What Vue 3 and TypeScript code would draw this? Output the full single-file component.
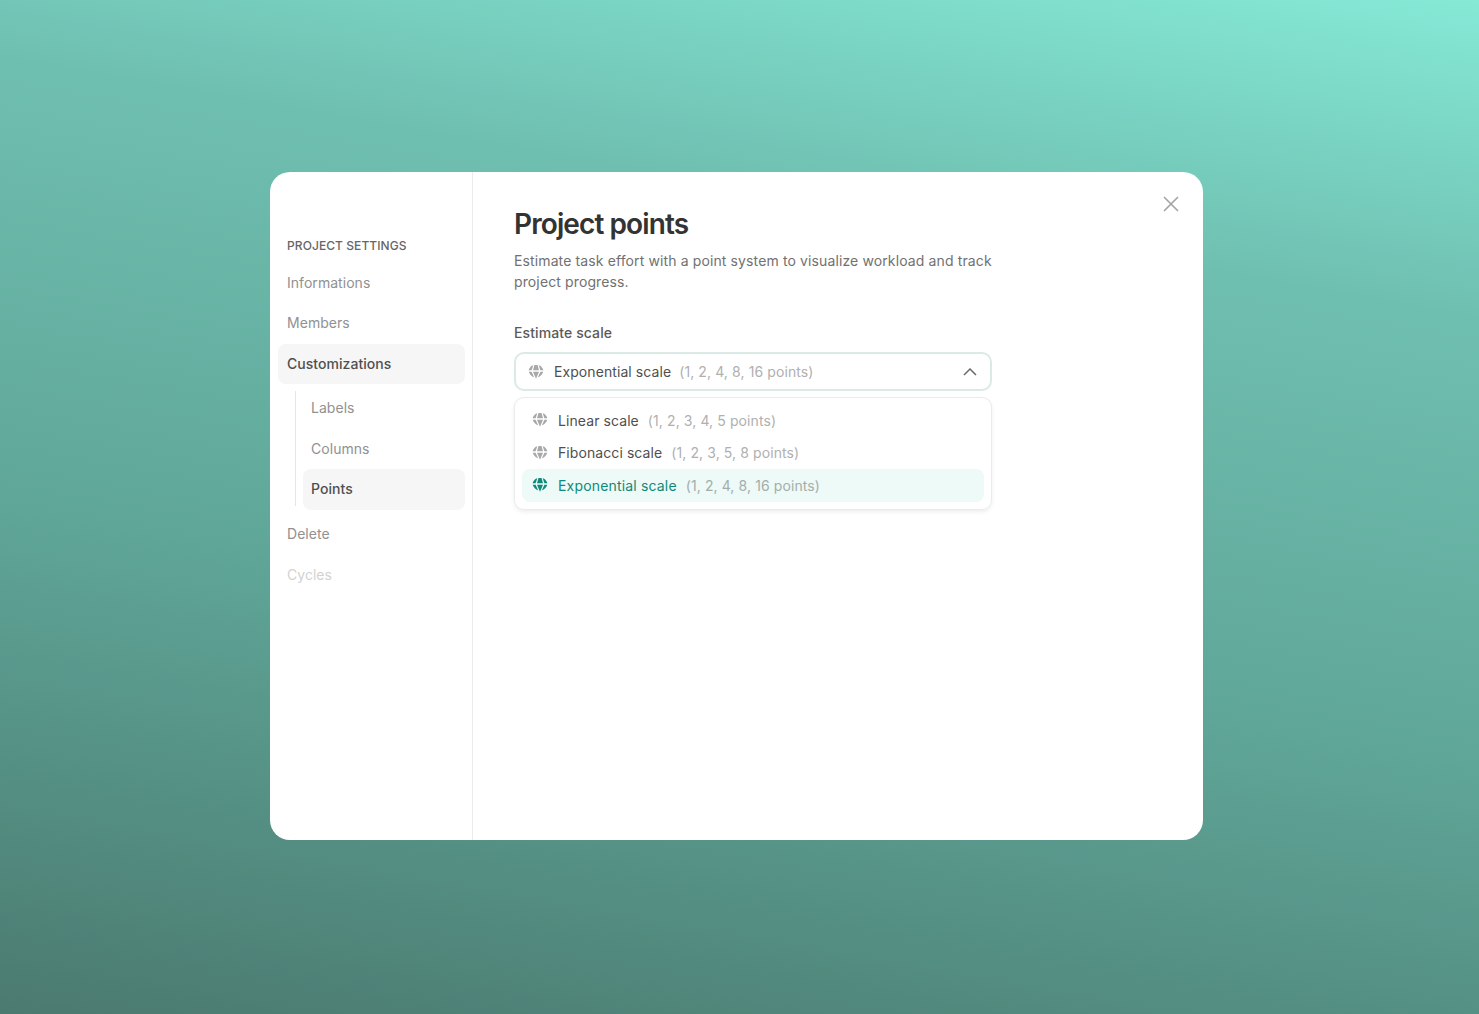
<template>
  <div class="page">
    <div class="modal">
      <aside class="sidebar">
        <h2 class="side-title">PROJECT SETTINGS</h2>
        <a class="nav-item">Informations</a>
        <a class="nav-item">Members</a>
        <a class="nav-item active">Customizations</a>
        <div class="sub-nav">
          <a v-for="s in subItems" :key="s" class="nav-item sub" :class="{ active: s === 'Points' }">{{ s }}</a>
        </div>
        <a class="nav-item delete">Delete</a>
        <a class="nav-item disabled">Cycles</a>
      </aside>
      <main class="content">
        <button class="close" aria-label="Close">
          <svg width="16" height="16" viewBox="0 0 16 16" fill="none" stroke="#a3a3a3" stroke-width="1.6">
            <path d="M1 1l14 14M15 1L1 15" />
          </svg>
        </button>
        <h1 class="title">Project points</h1>
        <p class="desc">Estimate task effort with a point system to visualize workload and track project progress.</p>
        <label class="label">Estimate scale</label>
        <div class="select">
          <svg class="gem" viewBox="0 0 16 16" fill="#a8a8a8"><path :d="gemPath" /></svg>
          <span class="opt-name">Exponential scale</span>
          <span class="opt-hint">(1, 2, 4, 8, 16 points)</span>
          <svg class="chev" width="14" height="8" viewBox="0 0 14 8" fill="none" stroke="#6b6b6b" stroke-width="1.5">
            <path d="M1 7l6-6 6 6" />
          </svg>
        </div>
        <div class="menu">
          <div v-for="o in options" :key="o.name" class="option" :class="{ selected: o.selected }">
            <svg class="gem" viewBox="0 0 16 16" fill="currentColor"><path :d="gemPath" /></svg>
            <span class="opt-name">{{ o.name }}</span>
            <span class="opt-hint">{{ o.hint }}</span>
          </div>
        </div>
      </main>
    </div>
  </div>
</template>

<script setup lang="ts">
interface ScaleOption {
  name: string
  hint: string
  selected?: boolean
}

const subItems = ['Labels', 'Columns', 'Points']

const options: ScaleOption[] = [
  { name: 'Linear scale', hint: '(1, 2, 3, 4, 5 points)' },
  { name: 'Fibonacci scale', hint: '(1, 2, 3, 5, 8 points)' },
  { name: 'Exponential scale', hint: '(1, 2, 4, 8, 16 points)', selected: true }
]

// gem: three facets on top, three converging to a point below
const gemPath =
  'M4.4 1.6C2.6 2.6 1.2 4.2.6 6.2h3L5.3 1.3zM6.5 1h3L11 6.2H5zM11.6 1.6c1.8 1 3.2 2.6 3.8 4.6h-3L10.7 1.3zM.7 7.8h2.9l2.6 5.8C3.6 12.6 1.6 10.4.7 7.8zM5 7.8h6l-3 7zM15.3 7.8h-2.9l-2.6 5.8c2.6-1 4.6-3.2 5.5-5.8z'
</script>

<style>
html,
body {
  margin: 0;
  height: 100%;
}
</style>

<style scoped>
.page {
  height: 1014px;
  display: flex;
  align-items: flex-start;
  justify-content: flex-start;
  padding: 172px 0 0 270px;
  box-sizing: border-box;
  background: linear-gradient(190deg, #85e9d6 0%, #6fbfb0 25%, #5fa698 60%, #4b7a70 100%);
  font-family: Inter, "Liberation Sans", sans-serif;
}

.modal {
  width: 933px;
  height: 668px;
  display: flex;
  background: #fff;
  border-radius: 20px;
  overflow: hidden;
}

.sidebar {
  width: 203px;
  flex-shrink: 0;
  box-sizing: border-box;
  padding: 66px 7px 0 8px;
  border-right: 1px solid #e9ecec;
  display: flex;
  flex-direction: column;
}

.side-title {
  margin: 0 0 9.5px 9px;
  font-size: 12px;
  line-height: 15px;
  font-weight: 500;
  letter-spacing: 0.08px;
  color: #666;
}

.nav-item {
  display: block;
  height: 40.5px;
  line-height: 40.5px;
  padding-left: 9px;
  border-radius: 8px;
  font-size: 14px;
  letter-spacing: 0.04px;
  color: #919191;
}

.nav-item.active {
  background: #f6f6f6;
  color: #4f4f4f;
  font-weight: 500;
}

.nav-item.disabled {
  color: #d2d2d2;
}

.sub-nav {
  position: relative;
  margin: 4px 0 4.5px 17px;
  padding-left: 8px;
  display: flex;
  flex-direction: column;
}

.sub-nav::before {
  content: "";
  position: absolute;
  left: 0;
  top: 3px;
  bottom: 4px;
  width: 1px;
  background: #e6e6e6;
}

.nav-item.sub {
  padding-left: 8px;
}

.content {
  position: relative;
  flex: 1;
  padding: 36px 0 0 41px;
}

.close {
  position: absolute;
  top: 24px;
  right: 24px;
  padding: 0;
  border: 0;
  background: none;
  line-height: 0;
}

.title {
  margin: 0;
  font-size: 28px;
  line-height: 32px;
  font-weight: 600;
  letter-spacing: -0.9px;
  color: #333;
}

.desc {
  width: 490px;
  margin: 10px 0 0;
  font-size: 14px;
  line-height: 21px;
  letter-spacing: 0.12px;
  color: #717171;
}

.label {
  display: block;
  margin-top: 31px;
  font-size: 14px;
  line-height: 20px;
  font-weight: 500;
  letter-spacing: 0.1px;
  color: #5a5a5a;
}

.select {
  width: 478px;
  height: 39px;
  margin-top: 9px;
  box-sizing: border-box;
  padding: 0 13px 0 12px;
  display: flex;
  align-items: center;
  border: 2px solid #dceae7;
  border-radius: 10px;
}

.gem {
  width: 16px;
  height: 16px;
  flex-shrink: 0;
  margin-right: 10px;
}

.opt-name {
  font-size: 14px;
  letter-spacing: 0.08px;
  color: #4f4f4f;
  margin-right: 9px;
}

.select .opt-name {
  margin-right: 8px;
}

.opt-hint {
  font-size: 14px;
  letter-spacing: 0.1px;
  color: #b0b0b0;
}

.chev {
  margin-left: auto;
}

.menu {
  width: 478px;
  margin-top: 6px;
  box-sizing: border-box;
  padding: 6px 7px 7px;
  border: 1px solid #e8eceb;
  border-radius: 10px;
  box-shadow: 0 2px 4px rgba(0, 0, 0, 0.07);
}

.option {
  height: 32.5px;
  padding: 0 10px;
  display: flex;
  align-items: center;
  border-radius: 8px;
  color: #a8a8a8;
}

.option.selected {
  background: #edfaf7;
  color: #0d8a7a;
}

.option.selected .opt-name {
  color: #0d8a7a;
  letter-spacing: 0.17px;
}

.option.selected .opt-hint {
  color: #a3aeab;
}
</style>
